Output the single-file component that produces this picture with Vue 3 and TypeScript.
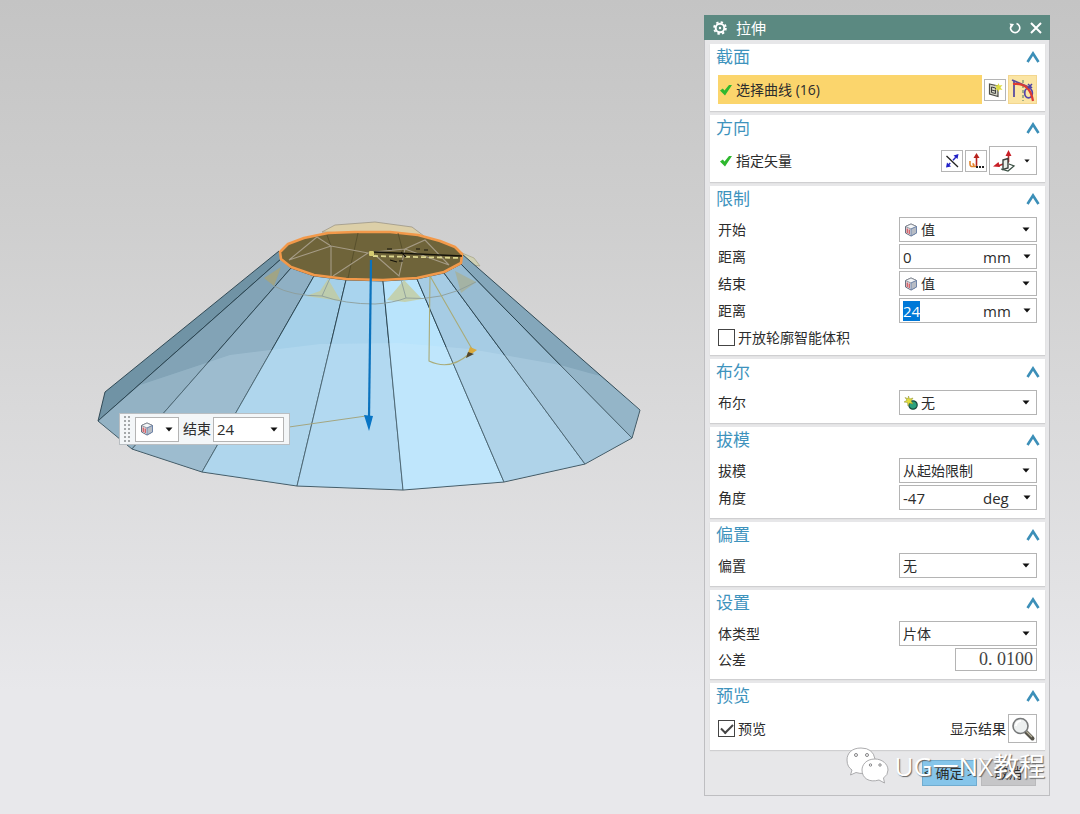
<script setup lang="ts">
import { onMounted, ref } from 'vue'

interface Facet {
  points: string
  fill: string
}

const topRing: [number, number][] = [
  [279, 251], [281, 259], [291, 268], [314, 276], [346, 280],
  [383, 281], [417, 279], [444, 273], [461, 264], [462, 254],
]
const baseRing: [number, number][] = [
  [105, 392], [98, 421], [132, 449], [202, 472], [297, 486],
  [403, 490], [504, 482], [585, 464], [632, 438], [640, 410],
]
const fills = ['#7093a5', '#82a3b6', '#8fb0c4', '#a5d0e9', '#a9d4ee', '#b9e4fc', '#a6cce4', '#98bcd2', '#84a7bb']

const facets: Facet[] = fills.map((fill, i) => ({
  fill,
  points: [topRing[i], topRing[i + 1], baseRing[i + 1], baseRing[i]].map((p) => p.join(',')).join(' '),
}))

const startType = ref('值')
const endType = ref('值')
const startDistance = ref('0')
const endDistance = ref('24')
const openProfile = ref(false)
const booleanOp = ref('无')
const draft = ref('从起始限制')
const angle = ref('-47')
const offset = ref('无')
const bodyType = ref('片体')
const tolerance = ref('0. 0100')
const preview = ref(true)

const endInput = ref<HTMLInputElement | null>(null)
onMounted(() => {
  endInput.value?.focus()
  endInput.value?.select()
})
</script>

<template>
  <svg class="symbols" aria-hidden="true">
    <symbol id="cube" viewBox="0 0 14 14">
      <path d="M7 1 L12.500 3.500 V10 L7 13 L1.500 10 V3.500Z" fill="#e3e3e8" stroke="#6a7080" />
      <path d="M1.500 3.500 L7 6 L12.500 3.500 L7 1Z" fill="#f4f6f8" stroke="#7b828c" stroke-width=".8" />
      <path d="M7 6 V13 L12.500 10 V3.500Z" fill="#b7bcc4" stroke="#6680ac" stroke-width=".8" />
      <path d="M3.200 5.500 V10 M5.200 6.500 V11" stroke="#cf4046" stroke-width="1.100" />
    </symbol>
    <symbol id="chevron" viewBox="0 0 14 12">
      <path d="M1.500 11 L7 2.500 L12.500 11" fill="none" stroke="#3c8fb8" stroke-width="2.600" />
    </symbol>
    <symbol id="caret" viewBox="0 0 8 5">
      <path d="M.5 .5 H7.500 L4 4.500Z" fill="#111" />
    </symbol>
    <symbol id="check" viewBox="0 0 12 12">
      <path d="M0 6.500 L2.800 4.500 L4.500 6.500 L9 1 L12 1 L5 11.500Z" fill="#2eb82e" />
    </symbol>
  </svg>

  <main class="workspace">
    <section class="viewport" aria-label="模型视图">
      <svg class="model" viewBox="0 0 704 814">
        <path d="M322 232 L335 225 L375 222 L412 227 L424 236 Z" fill="#dccfa8" stroke="#9d9787" stroke-width=".8" />
        <path d="M462 253 L474 258 L480 266 L466 264Z" fill="#d0d1b4" stroke="#aaa78c" stroke-width=".8" />
        <polygon v-for="f in facets" :key="f.points" :points="f.points" :fill="f.fill" stroke="#253e4b" stroke-width=".9" />
        <path
          d="M140 385 L230 355 L320 344 L400 343 L470 349 L560 365 L600 376 L640 410 L632 438 L585 464 L504 482 L403 490 L297 486 L202 472 L132 449 L98 421Z"
          fill="#d8f2ff" opacity=".2"
        />
        <g fill="#c5cb98" fill-opacity=".75">
          <path d="M264 278 L281 267 L274 286Z" fill="#a9a474" />
          <path d="M328 279 L341 301 L306 296 L320 291Z" />
          <path d="M404 280 L422 299 L405 302 L387 300Z" />
          <path d="M455 271 L476 282 L461 293Z" fill="#a8b094" />
        </g>
        <path d="M274 286 Q292 296 322 296 Q345 304 375 304 Q393 303 406 298 Q440 302 476 282" fill="none" stroke="#8d9d9a" stroke-width=".9" />
        <path d="M331 276 L322 296 M400 276 L406 298" stroke="#8d9d9a" stroke-width=".9" />
        <polygon
          points="280,252 288,244 304,238 328,233 355,232 390,232 418,235 440,241 455,247 462,254 461,263 444,272 417,278 383,280 346,279 314,275 291,267 281,259"
          fill="#6f643a" stroke="#f2994a" stroke-width="2.600" stroke-linejoin="round"
        />
        <g fill="none" stroke="#4f4726" stroke-width=".7">
          <path d="M358 233 L348 278 M398 233 L404 256 M327 235 L331 246" />
        </g>
        <path
          d="M289 260 L317 237 L331 246 V276 M289 260 L331 246 L368 253 L333 276 M375 255 L399 276 L405 249 L425 240 L449 265 L405 249 L374 252"
          fill="none" stroke="#a59b85" stroke-width="1.100"
        />
        <path d="M373 252 L462 256" stroke="#15130a" stroke-width="1.400" />
        <path d="M373 256 L460 258" stroke="#ddd78f" stroke-width="1.800" stroke-dasharray="5 3" />
        <path d="M387 249 h5 M401 252 l5 5 M416 249 h4 M424 250 h4 M390 260 l7 2 M399 261 h4" stroke="#15130a" stroke-width="1.200" />
        <path d="M430 276 L429 361 Q450 371 469 354 M430 276 L472 349" fill="none" stroke="#a9ab78" stroke-width="1.100" />
        <path d="M470 347 L477 350 L466 358Z" fill="#d9aa3d" />
        <path d="M468 352 L474 354 L466 358Z" fill="#4e4631" />
        <path d="M289 427 L366 416" stroke="#a4a681" />
        <path d="M371 260 L369 418" stroke="#0b72bd" stroke-width="2.200" />
        <path d="M364 415 L373 416 L369 431Z" fill="#0875c5" />
        <rect x="369" y="251" width="5" height="5" rx="1" fill="#d5cb72" />
      </svg>

      <div class="mini-bar">
        <span class="grip"></span>
        <button class="mini-type" type="button" aria-label="类型">
          <svg class="cube"><use href="#cube" /></svg>
          <svg class="caret"><use href="#caret" /></svg>
        </button>
        <label for="mini-end">结束</label>
        <span class="field mini-field">
          <input id="mini-end" v-model="endDistance" type="text" />
          <button class="drop" type="button" aria-label="选项"><svg class="caret"><use href="#caret" /></svg></button>
        </span>
      </div>
    </section>

    <form class="dialog" aria-label="拉伸" @submit.prevent>
      <header class="titlebar">
        <svg class="gear" viewBox="0 0 14 14">
          <circle cx="7" cy="7" r="4.300" fill="none" stroke="#fff" stroke-width="2" />
          <circle cx="7" cy="7" r="5.900" fill="none" stroke="#fff" stroke-width="1.800" stroke-dasharray="2.400 2.230" />
          <circle cx="7" cy="7" r="1.200" fill="#fff" />
        </svg>
        <h1>拉伸</h1>
        <button type="button" aria-label="重置">
          <svg viewBox="0 0 12 12"><path d="M7.500 1.600 A4.600 4.600 0 1 1 2 4" fill="none" stroke="#fff" stroke-width="1.600" /><path d="M.5 1.500 L5 2 L2.500 6Z" fill="#fff" /></svg>
        </button>
        <button type="button" aria-label="关闭">
          <svg viewBox="0 0 12 12"><path d="M1 1 L11 11 M11 1 L1 11" stroke="#fff" stroke-width="2" /></svg>
        </button>
      </header>

      <div class="groups">
        <section class="group">
          <h2>截面<button type="button" aria-label="折叠截面"><svg><use href="#chevron" /></svg></button></h2>
          <div class="tools">
            <div class="pick active"><svg><use href="#check" /></svg>选择曲线 (16)</div>
            <button class="tool" type="button" aria-label="绘制截面">
              <svg viewBox="0 0 16 16">
                <path d="M2.500 2 L11 4 V14.500 L2.500 12Z" fill="#d4d4c6" stroke="#4d4d48" stroke-width="1.200" />
                <path d="M4.500 5 L8.500 6 V11.500 L4.500 10.500Z M4.500 8 L8.500 9" fill="none" stroke="#3f4040" />
                <path d="M11.500 1 L12.500 3.500 L15.500 3 L13.500 5.500 L15.500 8 L12.500 7.500 L11.500 10 L10.500 7.500 L8 8 L9.500 5.500 L8 3 L10.500 3.500Z" fill="#dedc45" />
              </svg>
            </button>
            <button class="tool large lit" type="button" aria-label="曲线">
              <svg viewBox="0 0 26 26">
                <path d="M4 4 V20 M2 3 L21 11" fill="none" stroke="#594da0" stroke-width="1.800" />
                <path d="M13 3 V24" stroke="#4f7762" stroke-dasharray="3 2" />
                <ellipse cx="18.500" cy="16" rx="3.800" ry="4.800" fill="none" stroke="#5546ac" stroke-width="1.800" />
                <path d="M3 7 Q20 5 23 24" fill="none" stroke="#dc3a32" stroke-width="2.200" />
                <path d="M18 7 L22 11 M22 7 L18 11" stroke="#4a42a5" stroke-width="1.500" />
              </svg>
            </button>
          </div>
        </section>

        <section class="group">
          <h2>方向<button type="button" aria-label="折叠方向"><svg><use href="#chevron" /></svg></button></h2>
          <div class="tools">
            <div class="pick"><svg><use href="#check" /></svg>指定矢量</div>
            <button class="tool" type="button" aria-label="反向">
              <svg viewBox="0 0 16 16">
                <path d="M2.500 3 L14 14" stroke="#222" stroke-width="1.300" />
                <path d="M3.500 13 L13 3" stroke="#2929c4" stroke-width="1.500" stroke-dasharray="4 4" />
                <path d="M14.500 1 L13.500 6 L9.500 2.500Z M2 14.500 L3 9.500 L7 13.500Z" fill="#2020c7" />
              </svg>
            </button>
            <button class="tool" type="button" aria-label="矢量对话框">
              <svg viewBox="0 0 16 16">
                <path d="M8.500 13 V4" stroke="#b7211b" stroke-width="1.600" /><path d="M8.500 0 L11.500 5 H5.500Z" fill="#b7211b" />
                <path d="M2 8 V11 Q2 14 5 13.500 Q7 12 4.500 10.500 M4 13.500 H9" fill="none" stroke="#e3852c" stroke-width="1.600" />
                <path d="M8 14 h2 m1 0 h2 m1 0 h2" stroke="#222" stroke-width="2" />
              </svg>
            </button>
            <button class="tool vector" type="button" aria-label="矢量类型">
              <svg class="triad" viewBox="0 0 24 24">
                <path d="M15.500 13 V5 M15.500 13 L5 17" stroke="#b22a2a" stroke-width="1.600" />
                <path d="M15.500 1 L18.500 7 H12.500Z M0 17.500 L5.500 13 L7 18Z" fill="#c91f27" />
                <path d="M10 11 L15 9.500 V19 L10 20.500Z" fill="#e9eee8" stroke="#3b413d" stroke-width="1.400" />
                <path d="M8 20 L15 22 L21 17 L16 15" fill="none" stroke="#3b5145" stroke-width="1.300" />
              </svg>
              <svg class="caret small"><use href="#caret" /></svg>
            </button>
          </div>
        </section>

        <section class="group">
          <h2>限制<button type="button" aria-label="折叠限制"><svg><use href="#chevron" /></svg></button></h2>
          <div class="rows last-check">
            <div class="row">
              <label for="start-type">开始</label>
              <span class="field with-icon">
                <svg class="cube"><use href="#cube" /></svg>
                <select id="start-type" v-model="startType"><option>值</option></select>
                <svg class="caret"><use href="#caret" /></svg>
              </span>
            </div>
            <div class="row">
              <label for="start-distance">距离</label>
              <span class="field">
                <input id="start-distance" v-model="startDistance" type="text" />
                <span class="unit">mm</span>
                <button class="drop" type="button" aria-label="选项"><svg class="caret"><use href="#caret" /></svg></button>
              </span>
            </div>
            <div class="row">
              <label for="end-type">结束</label>
              <span class="field with-icon">
                <svg class="cube"><use href="#cube" /></svg>
                <select id="end-type" v-model="endType"><option>值</option></select>
                <svg class="caret"><use href="#caret" /></svg>
              </span>
            </div>
            <div class="row">
              <label for="end-distance">距离</label>
              <span class="field">
                <input id="end-distance" ref="endInput" v-model="endDistance" type="text" />
                <span class="unit">mm</span>
                <button class="drop" type="button" aria-label="选项"><svg class="caret"><use href="#caret" /></svg></button>
              </span>
            </div>
            <label class="tick"><input v-model="openProfile" type="checkbox" />开放轮廓智能体积</label>
          </div>
        </section>

        <section class="group">
          <h2>布尔<button type="button" aria-label="折叠布尔"><svg><use href="#chevron" /></svg></button></h2>
          <div class="rows">
            <div class="row">
              <label for="boolean-op">布尔</label>
              <span class="field with-icon">
                <svg class="cube" viewBox="0 0 14 14">
                  <circle cx="9" cy="9" r="4.200" fill="#2aa17d" stroke="#17483c" stroke-width="1.200" />
                  <path d="M4.500 0 L5.500 3 L9 2 L7 5 L9 8 L5.500 7 L4 10 L3.500 6.500 L0 6 L3 4.200 L1 1.500 L4 2.800Z" fill="#e2de3a" stroke="#8d8e2f" stroke-width=".5" />
                </svg>
                <select id="boolean-op" v-model="booleanOp"><option>无</option></select>
                <svg class="caret"><use href="#caret" /></svg>
              </span>
            </div>
          </div>
        </section>

        <section class="group">
          <h2>拔模<button type="button" aria-label="折叠拔模"><svg><use href="#chevron" /></svg></button></h2>
          <div class="rows">
            <div class="row">
              <label for="draft">拔模</label>
              <span class="field">
                <select id="draft" v-model="draft"><option>从起始限制</option></select>
                <svg class="caret"><use href="#caret" /></svg>
              </span>
            </div>
            <div class="row">
              <label for="angle">角度</label>
              <span class="field">
                <input id="angle" v-model="angle" type="text" />
                <span class="unit">deg</span>
                <button class="drop" type="button" aria-label="选项"><svg class="caret"><use href="#caret" /></svg></button>
              </span>
            </div>
          </div>
        </section>

        <section class="group">
          <h2>偏置<button type="button" aria-label="折叠偏置"><svg><use href="#chevron" /></svg></button></h2>
          <div class="rows">
            <div class="row">
              <label for="offset">偏置</label>
              <span class="field">
                <select id="offset" v-model="offset"><option>无</option></select>
                <svg class="caret"><use href="#caret" /></svg>
              </span>
            </div>
          </div>
        </section>

        <section class="group">
          <h2>设置<button type="button" aria-label="折叠设置"><svg><use href="#chevron" /></svg></button></h2>
          <div class="rows">
            <div class="row">
              <label for="body-type">体类型</label>
              <span class="field">
                <select id="body-type" v-model="bodyType"><option>片体</option></select>
                <svg class="caret"><use href="#caret" /></svg>
              </span>
            </div>
            <div class="row">
              <label for="tolerance">公差</label>
              <input id="tolerance" v-model="tolerance" class="tolerance" type="text" />
            </div>
          </div>
        </section>

        <section class="group">
          <h2>预览<button type="button" aria-label="折叠预览"><svg><use href="#chevron" /></svg></button></h2>
          <div class="tools preview">
            <label class="tick"><input v-model="preview" type="checkbox" />预览</label>
            <label for="show-result">显示结果</label>
            <button id="show-result" class="tool large" type="button">
              <svg viewBox="0 0 26 26">
                <path d="M15.500 15.500 L22.500 22.500" stroke="#55534a" stroke-width="4" stroke-linecap="round" />
                <path d="M16 15 L22 21" stroke="#b5b09a" stroke-width="1.200" />
                <circle cx="10.500" cy="10" r="7.500" fill="#edf0f0" stroke="#77797a" stroke-width="1.600" />
                <path d="M6 10 A5 5 0 0 1 11 5" fill="none" stroke="#fff" stroke-width="2" />
              </svg>
            </button>
          </div>
        </section>
      </div>

      <footer class="actions">
        <button class="ok" type="button">&lt; 确定 &gt;</button>
        <button class="cancel" type="button">取消</button>
        <div class="brand">
          <svg viewBox="0 0 44 38">
            <g fill="#fff" stroke="#a3a3a5" stroke-width=".9">
              <path d="M15 1 C6 1 1 6 1 13 C1 18 3 21 6 23 L4.500 28 L10 25.500 Q18 28 24 24 Q30 19 29 12 Q27 1 15 1Z" />
              <path d="M29 12 C20 12 16 18 16 23 C16 31 23 36 33 33 L38.500 36 L37.500 31 Q42 28 42 23 C42 17 36 12 29 12Z" />
            </g>
            <g fill="#fff" stroke="#858587"><circle cx="10" cy="8" r="1.500" /><circle cx="21" cy="8" r="1.500" /><circle cx="24.500" cy="18" r="1.200" /><circle cx="34" cy="18" r="1.200" /></g>
          </svg>
          <span>UG一NX教程</span>
        </div>
      </footer>
    </form>
  </main>
</template>

<style>
body {
  margin: 0;
}
</style>

<style scoped>
.workspace,
.workspace * {
  box-sizing: border-box;
}

.symbols {
  position: absolute;
  width: 0;
  height: 0;
}

.workspace {
  display: flex;
  align-items: flex-start;
  min-height: 100vh;
  background: linear-gradient(#c4c4c4, #cecece 26%, #d9d9da 50%, #e2e2e4 72%, #e8e8eb 85%, #e8e8eb);
  color: #2c2c2c;
  font: 14px/20px 'Open Sans', 'Noto Sans CJK SC', sans-serif;
}

.viewport {
  position: relative;
  flex: 1;
  min-width: 0;
}

.model {
  display: block;
  width: 100%;
}

button,
input,
select {
  margin: 0;
  padding: 0;
  border: 0;
  border-radius: 0;
  outline: 0;
  background: none;
  color: inherit;
  font: inherit;
}

.mini-bar {
  position: absolute;
  left: 119px;
  top: 413px;
  display: flex;
  align-items: center;
  gap: 4px;
  height: 32px;
  padding: 0 5px 0 3px;
  border: 1px solid #b9bec2;
  background: #f3f6f8;
}

.grip {
  width: 8px;
  height: 28px;
  background: radial-gradient(circle, #a4a8aa 1px, transparent 1px) 0 0 / 4px 4px;
}

.mini-type {
  display: flex;
  align-items: center;
  justify-content: space-between;
  width: 44px;
  height: 25px;
  padding: 0 5px 0 4px;
  border: 1px solid #b4b4b4;
  background: #fff;
}

.mini-bar .mini-field {
  width: 71px;
  margin-left: -2px;
}

.dialog {
  flex: 0 0 346px;
  margin: 15px 30px 18px 0;
  border: 1px solid #bebec1;
  border-top: 0;
  background: #e7e7e9;
}

.titlebar {
  display: flex;
  align-items: center;
  gap: 9px;
  height: 25px;
  margin: 0 -1px;
  padding: 0 8px 0 9px;
  background: #5b8981;
  color: #fff;
}

.titlebar svg {
  display: block;
  width: 12px;
  height: 12px;
}

.titlebar .gear {
  width: 14px;
  height: 14px;
  overflow: visible;
}

h1 {
  flex: 1;
  margin: 0;
  font-size: 15px;
  font-weight: 400;
}

.groups {
  display: grid;
  gap: 4px;
  padding: 4px 4px 0 5px;
}

.group {
  background: #fff;
  box-shadow: 0 1px 1px #cfcfd1;
}

h2 {
  display: flex;
  align-items: center;
  justify-content: space-between;
  height: 28px;
  margin: 0;
  padding: 0 5px 2px 6px;
  color: #3e93bd;
  font-size: 17px;
  font-weight: 400;
}

h2 svg {
  display: block;
  width: 14px;
  height: 12px;
}

.tools {
  display: flex;
  align-items: center;
  gap: 2px;
  padding: 3px 8px 7px;
}

.pick {
  display: flex;
  flex: 1;
  align-items: center;
  gap: 4px;
  height: 29px;
  padding-left: 2px;
}

.pick svg {
  width: 12px;
  height: 12px;
}

.active {
  background: #fbd56c;
}

.tool {
  display: flex;
  align-items: center;
  justify-content: center;
  width: 22px;
  height: 22px;
  border: 1px solid #b5b5b5;
  background: #fff;
}

.tool svg {
  width: 16px;
  height: 16px;
}

.large {
  width: 29px;
  height: 29px;
}

.large svg {
  width: 26px;
  height: 26px;
}

.lit {
  border-color: #f3d68e;
  background: #fbe5a4;
}

.vector {
  justify-content: space-between;
  width: 48px;
  height: 29px;
  padding: 0 6px 0 3px;
}

.vector .triad {
  width: 24px;
  height: 24px;
}

.rows {
  display: grid;
  gap: 2px;
  padding: 3px 8px 8px;
}

.last-check {
  padding-bottom: 5px;
}

.row {
  display: flex;
  align-items: center;
  justify-content: space-between;
}

.field {
  position: relative;
  display: flex;
  align-items: center;
  width: 138px;
  height: 25px;
  border: 1px solid #b4b4b4;
  background: #fff;
}

.field input {
  flex: 1;
  width: 0;
  min-width: 0;
  padding-left: 3px;
  font-size: 15px;
}

.field input::selection {
  background: #0078d7;
  color: #fff;
}

.field select {
  width: 100%;
  height: 100%;
  padding-left: 3px;
  appearance: none;
}

.field > .caret {
  position: absolute;
  right: 6px;
  pointer-events: none;
}

.field.with-icon select {
  padding-left: 21px;
}

.with-icon .cube {
  position: absolute;
  left: 4px;
  pointer-events: none;
}

.cube {
  width: 14px;
  height: 14px;
}

.unit {
  width: 39px;
  font-size: 15px;
}

.drop {
  display: flex;
  padding: 0 5px 0 1px;
}

svg.caret {
  width: 8px;
  height: 5px;
}

.vector svg.small {
  width: 6px;
  height: 4px;
}

.tolerance {
  width: 82px;
  height: 23px;
  padding-right: 3px;
  border: 1px solid #b4b4b4;
  color: #444;
  font-family: 'Liberation Serif', serif;
  font-size: 18px;
  text-align: right;
}

.tick {
  display: flex;
  align-items: center;
  gap: 3px;
  height: 25px;
}

.tick input {
  width: 17px;
  height: 17px;
  border: 1px solid #444;
  appearance: none;
}

.tick input:checked::before {
  display: block;
  width: 10px;
  height: 5px;
  margin: 3px 2px;
  border: solid #444;
  border-width: 0 0 2px 2px;
  content: '';
  transform: rotate(-45deg);
}

.preview .tick {
  flex: 1;
}

.actions {
  position: relative;
  display: flex;
  justify-content: flex-end;
  gap: 4px;
  padding: 10px 13px 9px;
}

.actions button {
  width: 55px;
  height: 26px;
  white-space: nowrap;
}

.actions .ok {
  border: 1px solid #70acd0;
  background: #86c5ea;
}

.actions .cancel {
  border: 1px solid #bababc;
  background: #c6c6c8;
}

.brand {
  position: absolute;
  right: 4px;
  top: -3px;
  display: flex;
  align-items: center;
  gap: 5px;
  color: #fff;
  font-size: 26px;
  line-height: 38px;
  text-shadow: 1px 1px 1px #666;
  white-space: nowrap;
  pointer-events: none;
}

.brand svg {
  width: 44px;
  height: 38px;
}
</style>
